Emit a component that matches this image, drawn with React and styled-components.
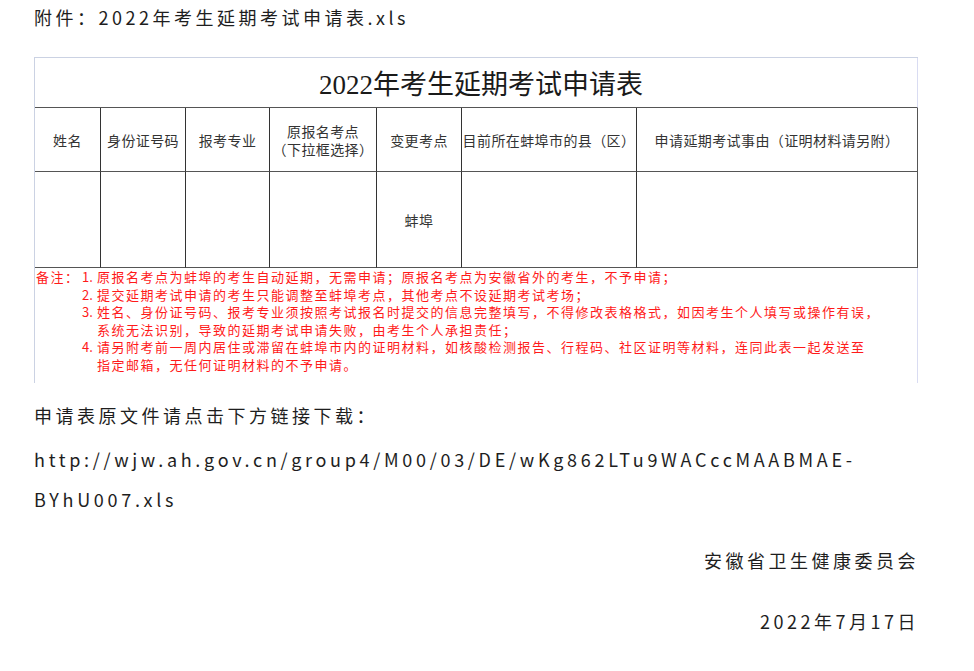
import React from "react"
import styled, { createGlobalStyle } from "styled-components"

const GlobalStyle = createGlobalStyle`
  html, body {
    margin: 0;
    padding: 0;
    background: #fff;
  }
  body {
    font-family: "Noto Sans CJK SC", "Noto Sans", sans-serif;
    color: #222;
  }
`

const columns = [66, 85, 84, 107, 85, 175, 281]

const headers = [
  ["姓名"],
  ["身份证号码"],
  ["报考专业"],
  ["原报名考点", "（下拉框选择）"],
  ["变更考点"],
  ["目前所在蚌埠市的县（区）"],
  ["申请延期考试事由（证明材料请另附）"],
]

const notes = [
  ["原报名考点为蚌埠的考生自动延期，无需申请；原报名考点为安徽省外的考生，不予申请；"],
  ["提交延期考试申请的考生只能调整至蚌埠考点，其他考点不设延期考试考场；"],
  [
    "姓名、身份证号码、报考专业须按照考试报名时提交的信息完整填写，不得修改表格格式，如因考生个人填写或操作有误，",
    "系统无法识别，导致的延期考试申请失败，由考生个人承担责任；",
  ],
  [
    "请另附考前一周内居住或滞留在蚌埠市内的证明材料，如核酸检测报告、行程码、社区证明等材料，连同此表一起发送至",
    "指定邮箱，无任何证明材料的不予申请。",
  ],
]

const App = () => {
  return (
    <Page>
      <GlobalStyle />
      <Para>附件：2022年考生延期考试申请表.xls</Para>

      <Sheet>
        <TitleCell>2022年考生延期考试申请表</TitleCell>
        {headers.map((lines, i) => (
          <HeadCell key={i} last={i === headers.length - 1}>
            {lines.map((l) => (
              <span key={l}>{l}</span>
            ))}
          </HeadCell>
        ))}
        {columns.map((_, i) => (
          <DataCell key={i} last={i === columns.length - 1}>
            {i === 4 ? "蚌埠" : ""}
          </DataCell>
        ))}
        <NoteCell>
          <NoteLabel>备注：</NoteLabel>
          {notes.map((lines, i) => (
            <React.Fragment key={i}>
              <NoteNum>{i + 1}.</NoteNum>
              <NoteText>
                {lines.map((l) => (
                  <span key={l}>{l}</span>
                ))}
              </NoteText>
            </React.Fragment>
          ))}
        </NoteCell>
      </Sheet>

      <Para top="12px">申请表原文件请点击下方链接下载：</Para>
      <Para top="4px" wide>
        http://wjw.ah.gov.cn/group4/M00/03/DE/wKg862LTu9WACccMAABMAE-BYhU007.xls
      </Para>
      <Para top="21px" align="right">安徽省卫生健康委员会</Para>
      <Para top="21px" align="right">2022年7月17日</Para>
    </Page>
  )
}

export default App

const Page = styled.div`
  width: 885px;
  margin-left: 34px;
  padding-bottom: 40px;
`

const Para = styled.p`
  margin: ${(p) => p.top || "0"} 0 0 0;
  font-size: 18px;
  line-height: 40px;
  letter-spacing: ${(p) => (p.wide ? "3.7px" : "3.5px")};
  color: #1e1e1e;
  text-align: ${(p) => p.align || "left"};
  overflow-wrap: anywhere;
  &:first-child {
    line-height: 34px;
  }
`

const Sheet = styled.div`
  margin-top: 23px;
  box-sizing: border-box;
  width: 884px;
  display: grid;
  grid-template-columns: ${columns.map((c) => `${c}px`).join(" ")};
  grid-template-rows: 50px 64px 96px 115px;
  border-top: 1px solid #cbd2e3;
  border-left: 1px solid #cbd2e3;
  background: #fff;
`

const TitleCell = styled.div`
  grid-column: 1 / -1;
  box-sizing: border-box;
  display: flex;
  align-items: center;
  justify-content: center;
  padding-left: 10px;
  border-right: 1px solid #d9dcf2;
  border-bottom: 1px solid #555;
  font-family: "Liberation Serif", "Noto Sans CJK SC", serif;
  font-size: 27px;
  color: #1a1a1a;
`

const HeadCell = styled.div`
  box-sizing: border-box;
  display: flex;
  flex-direction: column;
  align-items: center;
  justify-content: center;
  border-right: 1px solid ${(p) => (p.last ? "#555" : "#333")};
  border-bottom: 1px solid #555;
  font-size: 14px;
  letter-spacing: 0.4px;
  line-height: 18px;
  color: #333;
  white-space: nowrap;
`

const DataCell = styled(HeadCell)`
  font-size: 14px;
`

const NoteCell = styled.div`
  grid-column: 1 / -1;
  box-sizing: border-box;
  display: grid;
  grid-template-columns: 46px 15px 1fr;
  align-content: start;
  padding: 0 0 0 1px;
  border-right: 1px solid #d9dcf2;
  color: #ff1a1a;
  font-size: 13px;
  line-height: 17.5px;
  letter-spacing: 1.5px;
  white-space: nowrap;
`

const NoteLabel = styled.div`
  grid-column: 1;
  grid-row: 1;
`

const NoteNum = styled.div`
  grid-column: 2;
  letter-spacing: 0;
`

const NoteText = styled.div`
  grid-column: 3;
  display: flex;
  flex-direction: column;
`
